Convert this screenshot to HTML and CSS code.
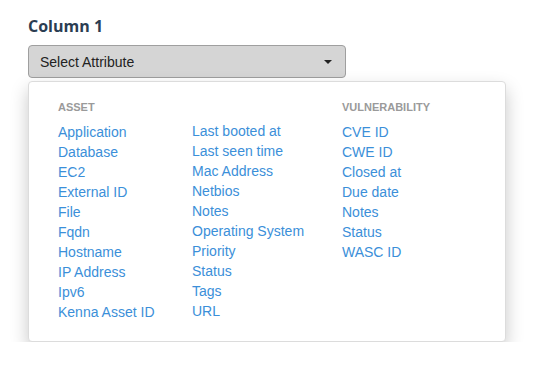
FILE: index.html
```html
<!DOCTYPE html>
<html>
<head>
  <meta charset="utf-8" />
  <title>Column picker</title>
  <link rel="stylesheet" href="styles.css">
</head>
<body>
  <div class="field">
    <h2>Column 1</h2>

    <button type="button" class="select">
      <span>Select Attribute</span>
      <span class="caret"></span>
    </button>

    <!-- open menu with attribute groups -->
    <div class="menu">
      <div class="group">
        <h4>Asset</h4>
        <a href="#">Application</a>
        <a href="#">Database</a>
        <a href="#">EC2</a>
        <a href="#">External ID</a>
        <a href="#">File</a>
        <a href="#">Fqdn</a>
        <a href="#">Hostname</a>
        <a href="#">IP Address</a>
        <a href="#">Ipv6</a>
        <a href="#">Kenna Asset ID</a>
      </div>
      <div class="group shifted">
        <h4>&nbsp;</h4>
        <a href="#">Last booted at</a>
        <a href="#">Last seen time</a>
        <a href="#">Mac Address</a>
        <a href="#">Netbios</a>
        <a href="#">Notes</a>
        <a href="#">Operating System</a>
        <a href="#">Priority</a>
        <a href="#">Status</a>
        <a href="#">Tags</a>
        <a href="#">URL</a>
      </div>
      <div class="group">
        <h4>Vulnerability</h4>
        <a href="#">CVE ID</a>
        <a href="#">CWE ID</a>
        <a href="#">Closed at</a>
        <a href="#">Due date</a>
        <a href="#">Notes</a>
        <a href="#">Status</a>
        <a href="#">WASC ID</a>
      </div>
    </div>
  </div>
</body>
</html>
```

FILE: styles.css
```css
html, body {
  margin: 0;
  padding: 0;
  background: #ffffff;
  font-family: "Liberation Sans", Arial, sans-serif;
}

.field {
  padding: 15px 0 0 28px;
  width: 478px;
}

h2 {
  margin: 0 0 8px;
  font-family: "Open Sans", sans-serif;
  font-size: 16px;
  font-weight: 700;
  line-height: 22px;
  color: #2b3d52;
}

/* the closed select box */
.select {
  display: flex;
  align-items: center;
  justify-content: space-between;
  width: 318px;
  height: 33px;
  margin: 0;
  padding: 0 12px 0 11px;
  background: #d5d5d5;
  border: 1px solid #9f9f9f;
  border-radius: 4px;
  font-family: inherit;
  font-size: 14px;
  color: #222;
  cursor: pointer;
}

.caret {
  width: 0;
  height: 0;
  margin-top: 1px;
  margin-right: 1px;
  border-left: 4px solid transparent;
  border-right: 4px solid transparent;
  border-top: 4px solid #222;
}

.menu {
  display: grid;
  grid-template-columns: 134px 150px auto;
  margin-top: 3px;
  padding: 16px 0 19px 29px;
  background: #fff;
  border: 1px solid #dcdcdc;
  border-radius: 4px;
  box-shadow: 0 8px 18px rgba(0,0,0,0.22);
}

.group {
  display: flex;
  flex-direction: column;
  align-items: flex-start;
}

.group.shifted {
  margin-top: -1px;
}

h4 {
  margin: 0 0 6px;
  font-size: 11px;
  line-height: 18px;
  font-weight: 700;
  text-transform: uppercase;
  color: #9a9a9a;
}

.group a {
  font-size: 14px;
  line-height: 20px;
  color: #3b8fd9;
  text-decoration: none;
}
```
